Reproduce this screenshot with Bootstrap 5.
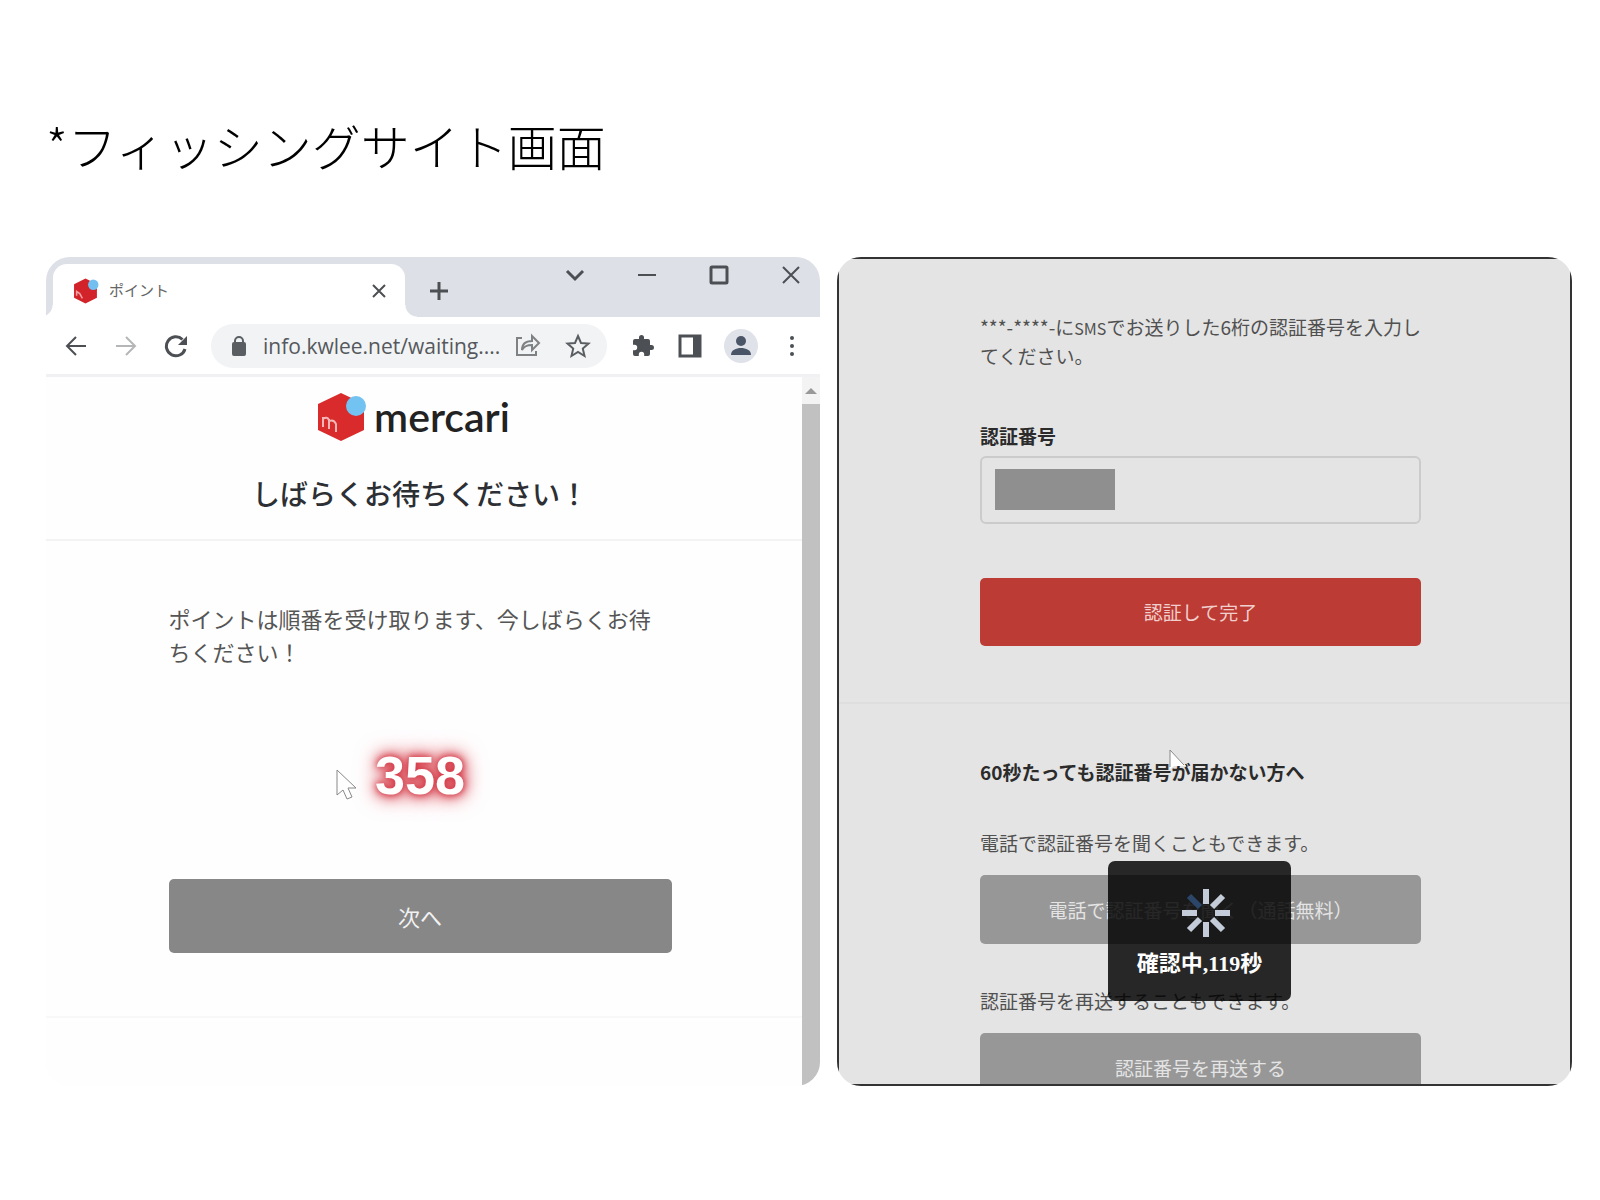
<!DOCTYPE html>
<html lang="ja">
<head>
<meta charset="utf-8">
<meta name="viewport" content="width=device-width, initial-scale=1">
<title>フィッシングサイト画面</title>
<link href="https://cdn.jsdelivr.net/npm/bootstrap@5.3.0/dist/css/bootstrap.min.css" rel="stylesheet">
<style>
body{background:#fff;font-family:"Noto Sans CJK JP",sans-serif;color:#555}
.slide{padding:108px 28px 108px 46px}
.slide-title{font-size:49px;line-height:73px;font-weight:300;color:#000;margin:0 0 76px}
.shots{gap:17px}
.shot{overflow:hidden;border-radius:24px;min-width:0}
.shot-left{flex:774 1 0;background:#fefefe}
.shot-right{flex:735 1 0}
.plain-btn{border:0;background:none;padding:0;line-height:0;color:#4c5054}
.plain-btn svg,.omni svg{display:block;fill:none;stroke:currentColor;stroke-width:2}
.strip{background:#dde0e6;height:60px;padding-left:7px}
.browser-tab{width:352px;margin-top:7px;background:#fff;border-radius:14px 14px 0 0;padding:0 19px 0 20px;position:relative}
.browser-tab::before,.browser-tab::after{content:"";position:absolute;bottom:0;width:12px;height:12px}
.browser-tab::before{left:-12px;background:radial-gradient(circle at 0 0,#dde0e6 11px,#fff 12px)}
.browser-tab::after{right:-12px;background:radial-gradient(circle at 100% 0,#dde0e6 11px,#fff 12px)}
.tab-name{font-size:15px;color:#666;margin-left:10px}
.win-ctl{gap:48px;padding:6px 17px 0 0}
.tools{height:57px;padding:0 16px 0 18px;background:#fff}
.nav-pair{gap:26px}
.dimmed{color:#b4b6b8}
.omni{background:#f1f3f4;border-radius:22px;height:44px;margin:0 23px;padding:0 16px 0 20px;color:#5a5d61;min-width:0}
.omni-url{font:21px "Open Sans",sans-serif;background:none;border:0;color:#55585c;margin-left:16px;padding:0;width:0;min-width:0;outline:0}
.omni-icons{gap:24px}
.tool-icons{gap:22px}
.avatar{width:34px;height:34px;border-radius:50%;background:#e0e2ea}
.viewport{border-top:3px solid #f1f1f3}
.scroller{width:18px;background:#c1c1c1}
.scroller-up{height:27px;background:#f3f3f3}
.brand-row{padding-right:12px;gap:8px}
.brand-word{font:600 41px/48px Lato,sans-serif;color:#222}
.brand-head{padding:15px 0 25px;border-bottom:2px solid #f3f3f3}
.brand-head h2{font-size:28px;line-height:42px;font-weight:500;color:#2c2f33;margin:30px 0 0}
.wait-body{width:68%;max-width:503px;margin:0 auto;padding-top:61px}
.wait-body p{font-size:22px;line-height:33px;margin:0 0 75px}
.counter{font:700 54px/64px "Liberation Sans",sans-serif;color:#fff;text-shadow:0 0 6px #d32f3d,0 0 12px #d43a47,0 0 18px #d9505b,0 0 24px #e27a83}
.arrow{position:absolute;fill:#fff;stroke:#888;stroke-width:1}
.arrow-left{left:166px;top:26px}
.arrow-right{left:329px;top:490px}
.flat-btn{display:block;width:100%;border:0;border-radius:5px;background:#979797;color:#e4e4e4;font-size:19px;height:69px;padding:0}
.next-btn{background:#878787;color:#f2f2f2;font-size:22px;height:74px;margin-top:72px}
.tail{border-top:2px solid #f8f8f8;margin-top:63px;height:70px}
.sms{border:2px solid #333;background:#e4e4e4;position:relative;height:100%;font-size:19px;line-height:28px;color:#505050}
.sms-col{width:62%;max-width:441px;margin-left:141px}
.sms-col p{margin:0}
.sms-top{padding:54px 0 56px}
.sms-col label,.sms-col h3{font-size:19px;line-height:28px;font-weight:700;color:#2b2b2b;margin:0}
.sms-top label{margin:52px 0 6px}
.latin{font-size:16px}
.sms-top .form-control{height:68px;border:2px solid #cbcbcb;border-radius:6px;background:#e4e4e4;padding:0 16px}
.redact{position:absolute;left:15px;top:13px;width:120px;height:41px;background:#8f8f8f}
.sms-top .go-btn{background:#bd3b35;color:#f0cfcc;height:68px;margin-top:54px}
.rule{border-top:2px solid #dedede}
.sms-more{padding-top:54px}
.sms-more .lead-line{margin-top:43px}
.sms-more .flat-btn{margin-top:18px}
.sms-more .second{margin-top:43px}
.sms-more .cut{margin-bottom:-32px}
.loader-box{position:absolute;left:269px;top:602px;width:183px;height:140px;border-radius:7px;background:rgba(0,0,0,.83);color:#fff;font:700 22px/30px "Liberation Serif","Noto Sans CJK JP",serif}
.spokes{margin:27px 0 11px 12px;stroke:#c3ccd8;stroke-width:6}
</style>
<script src="https://cdn.jsdelivr.net/npm/bootstrap@5.3.0/dist/js/bootstrap.bundle.min.js"></script>
</head>
<body>
<main class="slide">
  <h1 class="slide-title">*フィッシングサイト画面</h1>
  <div class="shots d-flex align-items-stretch">

    <section class="shot shot-left d-flex flex-column">
      <div class="strip d-flex">
        <div class="browser-tab d-flex align-items-center">
          <svg width="26" height="26" viewBox="0 0 48 50"><path d="M23 1 45 12v26L23 49 1 38V12z" fill="#d2232a"/><circle cx="38" cy="13" r="10" fill="#72bff0"/><path d="M6 34V26l6 4 5 9" stroke="#f0a0a0" stroke-width="3" fill="none"/></svg>
          <span class="tab-name flex-grow-1">ポイント</span>
          <button class="plain-btn" aria-label="タブを閉じる"><svg width="14" height="14"><path d="M1 1 13 13M13 1 1 13"/></svg></button>
        </div>
        <button class="plain-btn ms-4 mt-2" aria-label="新しいタブ"><svg width="20" height="20"><path stroke-width="3" d="M10 1v18M1 10h18"/></svg></button>
        <div class="win-ctl d-flex align-items-start ms-auto">
          <button class="plain-btn" aria-label="タブを検索"><svg width="24" height="24"><path stroke-width="3" d="M4 8l8 8 8-8"/></svg></button>
          <button class="plain-btn" aria-label="最小化"><svg width="24" height="24"><path d="M3 12h18"/></svg></button>
          <button class="plain-btn" aria-label="最大化"><svg width="24" height="24"><rect x="4" y="4" width="16" height="16" rx="1" stroke-width="3"/></svg></button>
          <button class="plain-btn" aria-label="閉じる"><svg width="24" height="24"><path d="M4 4l16 16M20 4 4 20"/></svg></button>
        </div>
      </div>

      <div class="tools d-flex align-items-center">
        <div class="nav-pair d-flex">
          <button class="plain-btn" aria-label="戻る"><svg width="24" height="24"><path d="M22 12H3M12 3l-9 9 9 9"/></svg></button>
          <button class="plain-btn dimmed" aria-label="進む"><svg width="24" height="24"><path d="M2 12h19M12 3l9 9-9 9"/></svg></button>
          <button class="plain-btn" aria-label="再読み込み"><svg width="24" height="24"><path d="M21 15A9.500 9.500 0 1 1 18.500 5.500" stroke-width="3"/><path d="M23 2v9h-9z" fill="currentColor" stroke="none"/></svg></button>
        </div>
        <div class="omni d-flex align-items-center flex-grow-1">
          <svg width="16" height="22"><rect x="2" y="8" width="12" height="12" rx="1" fill="currentColor"/><path d="M4 8V6a4 4 0 0 1 8 0v2"/></svg>
          <input class="omni-url flex-grow-1" aria-label="アドレス" value="info.kwlee.net/waiting....">
          <div class="omni-icons d-flex ms-2">
            <svg width="26" height="24" opacity=".75"><path d="M7 5H2v17h19v-4"/><path d="M7 17c0-6 4-9 10-9V3l7 7-7 7v-5c-5 0-8 1-10 5z"/></svg>
            <svg width="26" height="26"><path d="M13 3l3 7 7.500.600-5.700 5 1.700 7.400-6.500-4-6.500 4 1.700-7.400-5.700-5L10 10z"/></svg>
          </div>
        </div>
        <div class="tool-icons d-flex align-items-center">
          <button class="plain-btn" aria-label="拡張機能"><svg width="26" height="24" viewBox="0 0 24 24"><path fill="currentColor" stroke="none" d="M20.500 11H19V7a2 2 0 0 0-2-2h-4V3.500a2.500 2.500 0 0 0-5 0V5H4a2 2 0 0 0-2 2v3.800h1.500a2.700 2.700 0 0 1 0 5.400H2V20a2 2 0 0 0 2 2h3.800v-1.500a2.700 2.700 0 0 1 5.400 0V22H17a2 2 0 0 0 2-2v-4h1.500a2.500 2.500 0 0 0 0-5z"/></svg></button>
          <button class="plain-btn" aria-label="サイドパネル"><svg width="24" height="24"><rect x="2" y="2" width="20" height="20" stroke-width="3"/><path d="M15 2h7v20h-7z" fill="currentColor" stroke="none"/></svg></button>
          <button class="plain-btn avatar" aria-label="プロフィール"><svg width="34" height="34"><g fill="#4a5568" stroke="none"><circle cx="17" cy="12" r="5"/><path d="M7 26c0-5 5-7 10-7s10 2 10 7z"/></g></svg></button>
          <button class="plain-btn" aria-label="メニュー"><svg width="24" height="24"><g fill="currentColor" stroke="none"><circle cx="12" cy="4" r="2"/><circle cx="12" cy="12" r="2"/><circle cx="12" cy="20" r="2"/></g></svg></button>
        </div>
      </div>

      <div class="viewport d-flex flex-grow-1">
        <div class="flex-grow-1">
          <header class="brand-head text-center">
            <div class="brand-row d-flex justify-content-center align-items-center me-2">
              <svg width="48" height="50" viewBox="0 0 48 50"><path d="M23 1 46 12v26L23 49 0 38V12z" fill="#d92b2b"/><circle cx="38" cy="14" r="10" fill="#72c2f2"/><path d="M5 35V25M5 27q4-3 6 1v9M11 29q5-2 7 3v8" stroke="#f3b5b5" stroke-width="2" fill="none"/></svg>
              <span class="brand-word">mercari</span>
            </div>
            <h2 class="me-2">しばらくお待ちください！</h2>
          </header>
          <div class="pe-2">
            <div class="wait-body">
              <p>ポイントは順番を受け取ります、今しばらくお待ちください！</p>
              <div class="text-center position-relative">
                <span class="counter">358</span>
                <svg class="arrow arrow-left" width="24" height="32"><path d="M2 1v25l6-5 4 9 5-2-4-9h8z"/></svg>
              </div>
              <button class="flat-btn next-btn" type="button">次へ</button>
            </div>
          </div>
          <div class="tail"></div>
        </div>
        <div class="scroller"><div class="scroller-up d-flex justify-content-center align-items-center"><svg width="12" height="8"><path d="M6 1l6 6H0z" fill="#999"/></svg></div></div>
      </div>
    </section>

    <section class="shot shot-right">
      <div class="sms overflow-hidden">
        <div class="sms-col sms-top">
          <p class="text-nowrap">***-****-に<span class="latin">SMS</span>でお送りした6桁の認証番号を入力し<br>てください。</p>
          <label for="code">認証番号</label>
          <div class="position-relative">
            <input id="code" class="form-control" type="text">
            <span class="redact"></span>
          </div>
          <button class="flat-btn go-btn" type="button">認証して完了</button>
        </div>
        <div class="rule"></div>
        <div class="sms-col sms-more">
          <h3>60秒たっても認証番号が届かない方へ</h3>
          <p class="lead-line">電話で認証番号を聞くこともできます。</p>
          <button class="flat-btn" type="button">電話で認証番号を聞く（通話無料）</button>
          <p class="second">認証番号を再送することもできます。</p>
          <button class="flat-btn cut" type="button">認証番号を再送する</button>
        </div>
        <svg class="arrow arrow-right" width="20" height="22"><path stroke="none" d="M2 1v19l4-3h12z"/><path fill="none" d="M2 18V1l14 15"/></svg>
        <div class="loader-box d-flex flex-column align-items-center">
          <svg class="spokes" width="50" height="50" viewBox="-25 -25 50 50"><path d="M0-9V-24M0 9V24M9 0H24M-9 0H-24M6-6 17-17M6 6 17 17M-6 6-17 17"/><path d="M-6-6-17-17" stroke="#2b4668"/></svg>
          <span>確認中,119秒</span>
        </div>
      </div>
    </section>
  </div>
</main>
</body>
</html>
